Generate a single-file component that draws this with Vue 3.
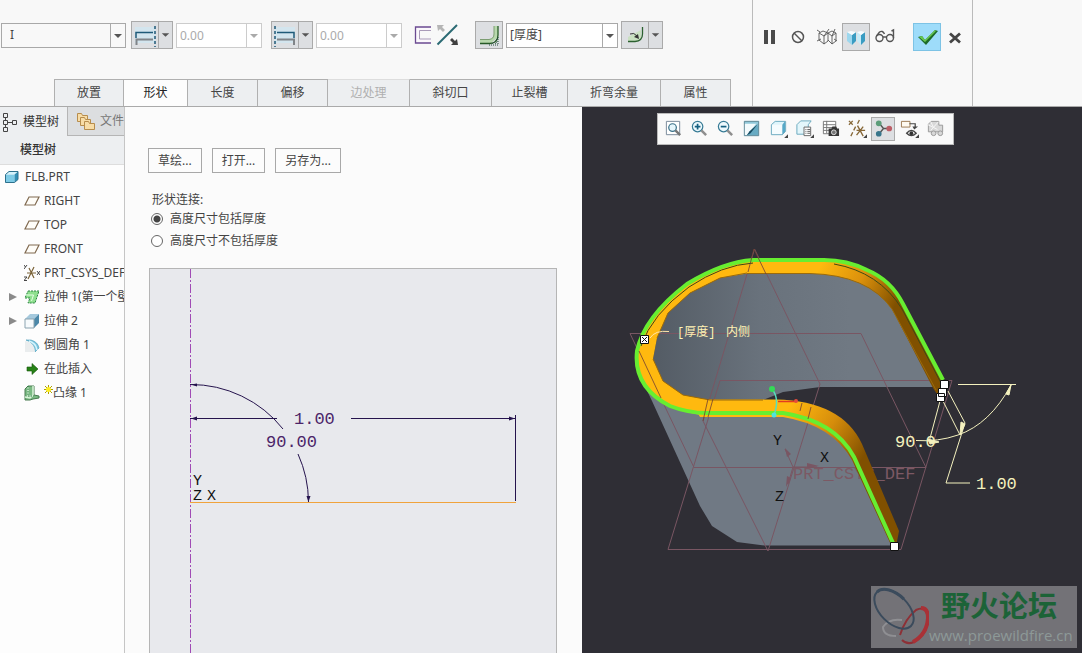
<script setup>
import { ref } from 'vue'

const tabs = [
  { label: '放置', w: 'w70' },
  { label: '形状', w: 'w64' },
  { label: '长度', w: 'w70' },
  { label: '偏移', w: 'w70' },
  { label: '边处理', w: 'w82', disabled: true },
  { label: '斜切口', w: 'w82' },
  { label: '止裂槽', w: 'w76' },
  { label: '折弯余量', w: 'w93' },
  { label: '属性', w: 'w70' },
]
const active = ref('形状')
const heightMode = ref('include')
const tree = [
  { icon: 'plane', label: 'RIGHT' },
  { icon: 'plane', label: 'TOP' },
  { icon: 'plane', label: 'FRONT' },
  { icon: 'csys', label: 'PRT_CSYS_DEF' },
  { icon: 'extrude', label: '拉伸 1(第一个壁)', open: true },
  { icon: 'box', label: '拉伸 2', open: true },
  { icon: 'round', label: '倒圆角 1' },
  { icon: 'insert', label: '在此插入' },
  { icon: 'flange', label: '凸缘 1', fresh: true },
]
</script>

<template>
  <div class="app">
    <header class="ribbon">
      <div class="dash">
        <div class="controls">
          <div class="combo profile">
            <select aria-label="轮廓"><option>I</option></select>
            <svg class="caret" viewBox="0 0 14 23"><path d="M3 10h8l-4 4z" /></svg>
          </div>
          <div class="split">
            <button aria-label="第一端">
              <svg viewBox="0 0 26 26"><path d="M3 5h20v16H3z" fill="#d3e5ee" /><path d="M4 16V10.500H21" fill="none" stroke="#1f5a78" stroke-width="1.500" /><path d="M4.500 23V17.500H21" fill="none" stroke="#808488" stroke-width="2" /><path d="M23 4V25" stroke="#1f5a78" stroke-width="1.500" stroke-dasharray="3 2" /></svg>
            </button>
            <button class="drop" aria-label="第一端选项"><svg class="caret" viewBox="0 0 14 26"><path d="M3 11h8l-4 4z" /></svg></button>
          </div>
          <div class="combo num off">
            <input value="0.00" aria-label="第一端长度" disabled />
            <svg class="caret" viewBox="0 0 14 23"><path d="M3 10h8l-4 4z" /></svg>
          </div>
          <div class="split second">
            <button aria-label="第二端">
              <svg viewBox="0 0 26 26"><path d="M3 5h20v16H3z" fill="#d3e5ee" /><path d="M5 10.500H22V16" fill="none" stroke="#1f5a78" stroke-width="1.500" /><path d="M5 17.500H22V23" fill="none" stroke="#808488" stroke-width="2" /><path d="M3 4V25" stroke="#1f5a78" stroke-width="1.500" stroke-dasharray="3 2" /></svg>
            </button>
            <button class="drop" aria-label="第二端选项"><svg class="caret" viewBox="0 0 14 26"><path d="M3 11h8l-4 4z" /></svg></button>
          </div>
          <div class="combo num off">
            <input value="0.00" aria-label="第二端长度" disabled />
            <svg class="caret" viewBox="0 0 14 23"><path d="M3 10h8l-4 4z" /></svg>
          </div>
          <button class="flat first" aria-label="切换侧">
            <svg viewBox="0 0 20 20" width="20" height="20"><path d="M18 1.500H2.500V18H18V14H6.500V5.500H18z" fill="#fbf8fc" /><path d="M18 2H2.500V18H18" fill="none" stroke="#6b4a91" stroke-width="1.300" /><path d="M18 5.500H6.500V14H18" fill="none" stroke="#a99bb8" /></svg>
          </button>
          <button class="flat" aria-label="反向">
            <svg viewBox="0 0 24 24" width="24" height="24"><path d="M1.500 21.500L21 2" stroke="#2a6a73" stroke-width="2" /><path d="M1 2h7L6 4l3 3-2 2-3-3-2 2z" fill="#b5b5b5" /><path d="M22 22h-7l2-2-3-3 2-2 3 3 2-2z" fill="#404040" /></svg>
          </button>
          <button class="press" aria-label="厚度侧">
            <svg viewBox="0 0 26 26"><path d="M4 17H14Q18 16 18 12V4H22V15L14 22H4z" fill="#b8d8ad" /><path d="M4 17.500H13Q18 17 18 12V4" fill="none" stroke="#7c9d72" /><path d="M4 21.500H14Q22 21 22 13V4" fill="none" stroke="#275a27" stroke-width="1.300" /><path d="M22 15V23H13" fill="none" stroke="#234d3a" stroke-dasharray="1 1" /><path d="M16 22L22 16M19 22L22 19" stroke="#234d3a" stroke-dasharray="1 1" /></svg>
          </button>
          <div class="combo thick">
            <select aria-label="厚度"><option>[厚度]</option></select>
            <svg class="caret" viewBox="0 0 14 23"><path d="M3 10h8l-4 4z" /></svg>
          </div>
          <div class="split">
            <button aria-label="折弯半径">
              <svg viewBox="0 0 26 26"><path d="M6 15L19 8V17L14 20H6z" fill="#c9e0c1" /><path d="M6 19.500H13Q20.500 19 20.500 12V5" fill="none" stroke="#2c6130" stroke-width="1.300" /><path d="M8 12Q12 10 15 14" fill="none" stroke="#333" /><path d="M17 17l-5-2 4-3z" fill="#333" /></svg>
            </button>
            <button class="drop" aria-label="半径选项"><svg class="caret" viewBox="0 0 14 26"><path d="M3 11h8l-4 4z" /></svg></button>
          </div>
        </div>
        <nav class="tabs">
          <button v-for="t in tabs" :key="t.label" :class="[t.w, { on: active === t.label }]" :disabled="t.disabled" @click="active = t.label">{{ t.label }}</button>
        </nav>
      </div>
      <div class="actions">
        <button class="act" aria-label="暂停"><svg viewBox="0 0 26 26"><path d="M8 6h4v14H8zM15 6h4v14h-4z" fill="#4a4a4a" /></svg></button>
        <button class="act" aria-label="无预览"><svg viewBox="0 0 26 26"><circle cx="13" cy="13" r="5.500" fill="none" stroke="#555" stroke-width="1.500" /><path d="M9 9l8 8" stroke="#555" stroke-width="1.500" /></svg></button>
        <button class="act" aria-label="未附着预览"><svg viewBox="0 0 26 26" fill="none" stroke="#555" stroke-width="0.900"><path d="M5 9l5 3v8l-5-4zM10 12l4-3v8l-4 3M14 9l4 3v8l-4-4M18 12l4-3v8l-4 3M5 9l4-2 5 2 4-2 4 2M10 12l5-7M18 12l3-7M3 6l3 2M3 17l4-2M20 15l3 2" /></svg></button>
        <button class="act press" aria-label="附着预览"><svg viewBox="0 0 26 26"><path d="M4 8l5 3v10l-5-4z" fill="#9cd7ee" /><path d="M9 11l4-3v9l-4 4z" fill="#3a9cc2" /><path d="M4 8l4-1 5 1-4 3z" fill="#f5fcff" /><path d="M14 8l4 3v10l-4-4z" fill="#c6ecf8" /><path d="M18 11l4-3v9l-4 4z" fill="#3a9cc2" /><path d="M14 8l4-1 4 1-4 3z" fill="#f5fcff" /></svg></button>
        <button class="act" aria-label="特征预览"><svg viewBox="0 0 26 26" fill="none" stroke="#555" stroke-width="1.400"><circle cx="7.500" cy="14" r="3.500" /><circle cx="18" cy="14" r="3.500" /><path d="M11 13h4M4.500 12l3-4q3-2 5 2M21.500 14V6l-2 1" /></svg></button>
        <button class="act ok" aria-label="确定"><svg viewBox="0 0 26 26"><path d="M4 13l4-1 3 4L21 6l3 1-12 14z" fill="#1d6b28" /><path d="M5 13l3-1 3 4L21 6l1 1-11 11z" fill="#67c94f" /></svg></button>
        <button class="act" aria-label="取消"><svg viewBox="0 0 26 26"><path d="M8 9.500l10 9M18 9.500l-10 9" stroke="#454545" stroke-width="2.800" /></svg></button>
      </div>
    </header>

    <main class="work">
      <aside class="side">
        <div class="side-tabs">
          <button class="on">
            <svg viewBox="0 0 16 20" width="16" height="20" fill="none" stroke="#444"><path d="M2.500 1.500h4v4h-4zM2.500 8.500h4v4h-4zM2.500 15.500h4v4h-4zM11.500 8.500h4v4h-4zM4.500 5.500v3M4.500 12.500v3M6.500 10.500h5" /></svg>
            模型树
          </button>
          <button>
            <svg viewBox="0 0 20 20" width="20" height="20" fill="#f8dda7" stroke="#b78d4d"><path d="M1.500 2.500h4l1 2h5v6h-10z" /><path d="M4.500 6.500h4l1 2h5v6h-10z" /><path d="M8.500 10.500h4l1 2h5v6h-10z" /></svg>
            文件夹
          </button>
        </div>
        <h2>模型树</h2>
        <ul class="tree">
          <li class="root">
            <svg viewBox="0 0 16 16" width="16" height="16"><path d="M2 5l3-3h9l-3 3z" fill="#d4f2fb" /><path d="M1.500 5.500h9v8h-9z" fill="#7ecbe6" /><path d="M10.500 5.500l3.500-3v8l-3.500 3z" fill="#318fb5" /><path d="M1.500 5.500l3.500-3h9v8l-3.500 3h-9z" fill="none" stroke="#2d718d" /></svg>
            <span>FLB.PRT</span>
          </li>
          <li v-for="n in tree" :key="n.label">
            <svg class="tw" viewBox="0 0 8 10" width="8" height="10"><path v-if="n.open" d="M0 1l8 4-8 4z" fill="#8a8a8a" /></svg>
            <svg class="ic" viewBox="0 0 16 16" width="16" height="16">
              <path v-if="n.icon === 'plane'" d="M5 4h10l-4 8H1z" fill="#fffdf8" stroke="#806a50" stroke-width="1.200" />
              <g v-else-if="n.icon === 'csys'" fill="none" stroke="#7b6338" stroke-width="1.200"><path d="M3 8h9M5 3l5 10M10 2L4 14" /><path d="M0 0l1.500 2L3 0M1.500 2L0 4M0 12h3l-3 3.500h3M13 6l3 4M16 6l-3 4" stroke="#333" stroke-width="0.900" /></g>
              <g v-else-if="n.icon === 'extrude'"><path d="M4 2h11l-4 12H4l2-5H1z" fill="#8fe08f" stroke="#2e8545" stroke-dasharray="2 1" /><path d="M1.500 6h8l-2 6" fill="none" stroke="#e6ffe6" /></g>
              <g v-else-if="n.icon === 'box'"><path d="M1 6l5-5h9l-5 5z" fill="#a5c9dd" /><path d="M10 6l5-5v9l-5 5z" fill="#4c88a9" /><path d="M1 6h9v9H1z" fill="#f6fafc" stroke="#8ba3b0" /></g>
              <g v-else-if="n.icon === 'round'"><path d="M2 3h5q7 2 8 8l-4 4q0-9-9-12z" fill="#7cc6df" stroke="#4a9bb8" stroke-width="0.600" /><path d="M1 4q9 1 10 11H1z" fill="#eaedee" /><path d="M5 4q7 2 8 9" fill="none" stroke="#d8f5fd" stroke-width="1.500" /></g>
              <path v-else-if="n.icon === 'insert'" d="M3 6h5V2.500L14 8l-6 5.500V10H3z" fill="#278216" stroke="#14540c" stroke-width="0.600" />
              <g v-else><path d="M1 4l3-3h6v9l5 1v2l-6 1-3 1H1z" fill="#7aba82" stroke="#497b50" /><path d="M4 2v9h5V1M1 12l5 1 3-3" fill="none" stroke="#d9f3d9" stroke-width="1.500" /><path d="M4 1v10h6" fill="none" stroke="#26783b" stroke-dasharray="1.500 1" /></g>
            </svg>
            <svg v-if="n.fresh" class="star" viewBox="0 0 9 9" width="9" height="9"><path d="M4.500 0v9M0 4.500h9M1 1l7 7M8 1L1 8" stroke="#ada000" /><circle cx="4.500" cy="4.500" r="2.500" fill="#ffee20" /></svg>
            <span>{{ n.label }}</span>
          </li>
        </ul>
      </aside>

      <section class="panel">
        <div class="btns">
          <button>草绘...</button>
          <button>打开...</button>
          <button>另存为...</button>
        </div>
        <fieldset>
          <legend>形状连接:</legend>
          <label><input v-model="heightMode" type="radio" name="height" value="include" />高度尺寸包括厚度</label>
          <label><input v-model="heightMode" type="radio" name="height" value="exclude" />高度尺寸不包括厚度</label>
        </fieldset>
        <div class="sketch">
          <svg viewBox="150 269 406 384" preserveAspectRatio="xMinYMin slice">
            <path d="M190.500 269V653" stroke="#a04bb5" stroke-dasharray="9 2 2 2" />
            <path d="M190 502.500H516" stroke="#f0a33c" />
            <g fill="none" stroke="#25134d">
              <path d="M190 384.500A118 118 0 0 1 283 429M298 454A118 118 0 0 1 308.500 502" />
              <path d="M190 418.500H277M351 418.500H515M515.500 415V501" />
            </g>
            <path d="M191 418.500l6-2v4zM515 418.500l-6-2v4zM308.500 502l-2-6h4zM191 384.500l6-1v3z" fill="#25134d" />
            <g class="cad" fill="#4b2468"><text x="294" y="424">1.00</text><text x="266" y="447">90.00</text></g>
            <g class="axis" fill="#111"><text x="193" y="485">Y</text><text x="193" y="500">Z</text><text x="207" y="500">X</text></g>
          </svg>
        </div>
      </section>

      <section class="view">
        <svg class="scene" viewBox="582 106 500 547" preserveAspectRatio="xMinYMin slice">
          <defs>
            <linearGradient id="top" gradientUnits="userSpaceOnUse" x1="820" y1="265" x2="895" y2="305"><stop offset="0" stop-color="#ffb90f" /><stop offset="0.500" stop-color="#dc910c" /><stop offset="1" stop-color="#805000" /></linearGradient>
            <linearGradient id="low" gradientUnits="userSpaceOnUse" x1="790" y1="405" x2="864" y2="455"><stop offset="0" stop-color="#ffb90f" /><stop offset="0.500" stop-color="#d68d0b" /><stop offset="1" stop-color="#805000" /></linearGradient>
            <linearGradient id="wall" gradientUnits="userSpaceOnUse" x1="650" y1="0" x2="850" y2="0"><stop offset="0" stop-color="#535b64" /><stop offset="0.550" stop-color="#69727c" /><stop offset="1" stop-color="#707983" /></linearGradient>
          </defs>
          <path d="M640 375L652 400L700 505L712 525L737 541L765 544.500H894L855 458Q838 420 784 411H700z" fill="#707984" />
          <path d="M653 358L657 337L668 312L690 292L720 277L747 272H820Q872 278 892 308L936 386H820L783 391L763 399H710L683 394L663 380z" fill="url(#wall)" />
          <g fill="none" stroke="#795663">
            <path d="M754.500 248L703 420L768 550L820 383z" />
            <path d="M720 379.500H952L901 548.500H668z" />
            <path d="M630 332.500H861L926 466.500H694z" />
          </g>
          <text class="cad" x="793" y="478" fill="#7c5964">PRT_CSYS_DEF</text>
          <path d="M753 259H824Q847 259 867 269Q891 279 903 303L944 382L939 396L933 387L892 308Q868 274 810 272.500H747L720 277L690 292L668 312L657 337L653 358L663 380L683 394L710 399H765L710 415Q688 413 670 405Q633 386 637 350Q644 316 687 283Q723 261 753 259z" fill="url(#top)" />
          <path d="M690 398.500H776Q842 400 862 443L899 530L896 546L891 544L852 459Q832 424 783 416H700z" fill="url(#low)" />
          <path d="M747 272.500H810Q868 274 892 308L936 389M653 358L663 380L683 394L710 399H763M657 337L668 312L690 292L720 277L747 272" fill="none" stroke="#9a6a0c" />
          <path d="M753 262Q722 264 689 286Q652 313 641 345M834 263Q879 271 902 308L941 382" fill="none" stroke="#3c4a16" />
          <path d="M943 379L903 303Q891 279 867 269Q847 259 824 259H753Q723 261 687 283Q644 316 637 350Q633 386 670 405Q688 412 707 412H783Q835 420 854 456L893 542" fill="none" stroke="#67ee31" stroke-width="4" />
          <g fill="none" stroke="#704033" stroke-opacity="0.800"><path d="M754 248L748 271M754 248L766 273M639 350L661 397M708 398L703 420M713 398L708 416M802 402L800 410M811 406L808 418" /></g>
          <path d="M772 388Q780 398 774 414" fill="none" stroke="#57dfbd" stroke-width="1.500" />
          <path d="M778 400.500H796" stroke="#e33b20" stroke-width="1.500" /><circle cx="796" cy="400" r="2" fill="#e34b3b" />
          <circle cx="772" cy="388" r="3" fill="#35d956" /><circle cx="774" cy="414" r="2.500" fill="#52e2dc" />
          <path d="M793 466L785 448M793 466H817M793 466L788 483" stroke="#795663" fill="none" /><path d="M785 447l2 9 4-3zM819 465l-12-3v5zM786 486l1-11 4 2z" fill="#795663" />
          <g class="axis" fill="#111"><text x="773" y="444">Y</text><text x="820" y="461">X</text><text x="775" y="500">Z</text></g>
          <g fill="none" stroke="#f4f1be">
            <path d="M958 383.500H1016M1011 384Q990 423 958 434Q938 441 916 439.500M948 390L965 422L946 482H970M942 398L960 434M940 400L929 441" />
            <path d="M650 337Q655 329 669 330.500" stroke="#ffe5a8" />
          </g>
          <path d="M1011 384l-5 9 3 1zM960 434l1-13 4 2zM928 438l11 3-9 2z" fill="#f4f1be" stroke="#f4f1be" />
          <g class="cad" fill="#f4f1be"><text x="895" y="446">90.0</text><text x="976" y="488">1.00</text></g>
          <text class="note" x="677" y="335" fill="#fff2b4">[厚度]</text><text class="note" x="726" y="335" fill="#fff2b4">内侧</text>
          <g fill="#fff" stroke="#111"><path d="M936.500 392.500h8v8h-8zM938.500 387.500h8v8h-8zM940.500 379.500h8v8h-8zM890.500 541.500h8v8h-8zM640.500 334.500h8v8h-8z" /><path d="M642 336l5 5M647 336l-5 5" /></g>
        </svg>

        <div class="viewbar">
          <button aria-label="重新调整"><svg viewBox="0 0 20 20"><path d="M2.500 2.500h14v14h-14z" fill="#fff" stroke="#789" /><circle cx="9" cy="9" r="4" fill="#e6f6fc" stroke="#397088" stroke-width="1.300" /><path d="M12 12l5 5" stroke="#777" stroke-width="2.500" /></svg></button>
          <button aria-label="放大"><svg viewBox="0 0 20 20"><circle cx="8" cy="8" r="5.500" fill="#eef9fd" stroke="#397c96" stroke-width="1.300" /><path d="M5 8h6M8 5v6" stroke="#156081" stroke-width="1.800" /><path d="M12 12l5 5" stroke="#8e8e8e" stroke-width="2.600" /></svg></button>
          <button aria-label="缩小"><svg viewBox="0 0 20 20"><circle cx="8" cy="8" r="5.500" fill="#eef9fd" stroke="#397c96" stroke-width="1.300" /><path d="M5 8h6" stroke="#156081" stroke-width="1.800" /><path d="M12 12l5 5" stroke="#8e8e8e" stroke-width="2.600" /></svg></button>
          <button aria-label="重画"><svg viewBox="0 0 20 20"><path d="M2 2h16v16H2z" fill="#91c8da" /><path d="M2 5h13L5 17H2z" fill="#f3fafc" /><path d="M6 16L17 6v11H6z" fill="#68abc3" /><path d="M5 17l3-4 9-8-8 10z" fill="#174c62" /><path d="M2.500 2.500h15v15h-15z" fill="none" stroke="#668b98" /></svg></button>
          <button aria-label="显示样式"><svg viewBox="0 0 20 20"><path d="M2 6l4-4h11l-3 4z" fill="#dff5fb" /><path d="M14 6l3-4v11l-3 4z" fill="#56a9c8" /><path d="M2.500 6.500h11v10h-11z" fill="#f5fcfe" /><path d="M2.500 6l4-3.500h11V13L14 16.500H2.500z" fill="none" stroke="#69a9be" /><path d="M20 16v4h-4z" fill="#444" /></svg></button>
          <button aria-label="已保存方向"><svg viewBox="0 0 20 20"><path d="M2 6l4-4h11l-3 4v10H2z" fill="#e3f6fb" stroke="#69a9be" /><path d="M9.500 8.500h7v9h-7z" fill="#fff" stroke="#666" /><path d="M11 11h1M13 11h3M11 13h1M13 13h3M11 15h1M13 15h3" stroke="#555" /><path d="M20 16v4h-4z" fill="#444" /></svg></button>
          <button aria-label="视图管理器"><svg viewBox="0 0 20 20"><path d="M2.500 2.500h13v13h-13zM2.500 6h13M2.500 9h13M2.500 12h13M6 2v13" fill="#fff" stroke="#777" /><path d="M8 10h3l1-2h4l1 2h2v8H8z" fill="#373737" /><circle cx="13.500" cy="14" r="2.500" fill="#777" stroke="#ddd" /></svg></button>
          <button aria-label="基准显示"><svg viewBox="0 0 20 20" fill="none" stroke="#876838" stroke-width="1.400"><path d="M1 2l4 4M5 2L1 6M12 1l-2 4M8 8l-2 4M5 14l-2 4M10 7l6 11M16 8l-7 9M9 12h9" /><path d="M20 16v4h-4z" fill="#444" stroke="none" /></svg></button>
          <button class="press" aria-label="旋转中心"><svg viewBox="0 0 20 20"><path d="M5 4l5 6-5 6M10 10h6" fill="none" stroke="#555" stroke-width="1.500" /><circle cx="5" cy="4.500" r="3" fill="#5b9c79" /><circle cx="5" cy="15.500" r="3" fill="#38758b" /><circle cx="16" cy="10" r="3" fill="#bd5e67" /></svg></button>
          <button aria-label="注释显示"><svg viewBox="0 0 20 20"><path d="M1.500 2.500h9v6h-9z" fill="#fffaf0" stroke="#9b7952" /><path d="M10 5h6v4" fill="none" stroke="#444" stroke-width="1.300" /><path d="M13 8h6l-4 3z" fill="#444" /><path d="M7 15q5-6 10 0-5 5-10 0z" fill="#fff" stroke="#444" stroke-width="1.400" /><circle cx="12" cy="15" r="2" fill="#333" /><path d="M20 16v4h-4z" fill="#444" /></svg></button>
          <button aria-label="预览" disabled><svg viewBox="0 0 20 20" fill="#d8d8d8" stroke="#999"><path d="M2.500 5.500l3-3h8v4h4v7h-15z" /><path d="M2 6l10 5M5 3l3 6M13 3l-8 9" fill="none" stroke="#f7f7f7" /><circle cx="8" cy="15" r="2.500" /><circle cx="15" cy="15" r="2.500" /></svg></button>
        </div>

        <div class="mark">
          <svg viewBox="0 0 58 62" width="58" height="62" fill="none">
            <path d="M29 49Q34 33 45 24Q55 19 57 30Q57 48 43 56Q36 59 31 54" stroke="#8d3036" stroke-width="2" />
            <path d="M50 22Q57 22 57 32Q56 48 42 56" stroke="#a93136" stroke-width="4" />
            <path d="M31 34Q18 32 12 41Q12 50 25 50" stroke="#8f8f93" stroke-width="2" />
            <g transform="rotate(45 23 23)"><ellipse cx="23" cy="23" rx="24" ry="14" stroke="#3b4b5c" stroke-width="2" /><path d="M-1 23a24 14 0 0 1 24-14" stroke="#3b4b5c" stroke-width="3" /></g>
          </svg>
          <div class="words"><strong>野火论坛</strong><span>www.proewildfire.cn</span></div>
        </div>
      </section>
    </main>
  </div>
</template>

<style>
body { margin: 0; overflow: hidden; }
</style>

<style scoped>
* { box-sizing: border-box; }
.app { display: flex; flex-direction: column; height: 100vh; background: #f8f8f8; color: #444; font: 12px/16px "Noto Sans", "Noto Sans CJK SC", sans-serif; }
button, input, select { font: inherit; color: inherit; margin: 0; padding: 0; border-radius: 0; }
button { border: 0; background: none; }
svg { display: block; flex: none; }
.ribbon { display: flex; flex: none; height: 107px; border-bottom: 1px solid #aaa; }
.dash { display: flex; flex-direction: column; justify-content: space-between; width: 753px; border-right: 1px solid #bbb; padding-top: 21px; }
.controls { display: flex; align-items: center; height: 28px; padding-left: 1px; }
.combo { display: grid; grid-template-columns: 1fr 15px; height: 25px; border: 1px solid #a8a8a8; background: #fff; }
.combo select, .combo input { grid-area: 1 / 1 / 2 / 2; width: 100%; min-width: 0; height: 23px; border: 0; padding-left: 3px; background: transparent; appearance: none; outline: 0; }
.combo .caret { width: 15px; height: 23px; border-left: 1px solid #aaa; }
.caret { fill: #555; }
.profile { width: 125px; background: #f8f8f8; margin-right: 5px; }
.profile select { padding-left: 8px; }
.num { width: 86px; }
.off { border-color: #ccc; color: #aaa; }
.off .caret { fill: #aaa; border-color: #ccc; }
.thick { width: 112px; margin: 0 3px; }
.split { display: flex; height: 28px; border: 1px solid #aaa; background: #dddfe2; margin-right: 3px; }
.split svg { width: 26px; height: 26px; }
.split .drop { border-left: 1px solid #aaa; }
.split .drop .caret { width: 13px; }
.second { margin-left: 9px; }
.flat.first { margin: 0 3px 0 11px; }
.press { border: 1px solid #aaa; background: #dddfe2; }
.controls > .press { width: 28px; height: 28px; margin-left: 15px; }
.tabs { display: flex; height: 27px; padding-left: 54px; }
.tabs button { flex: none; border: 1px solid #b0b0b0; border-width: 1px 1px 0 0; background: #edeff1; }
.tabs button:first-child { border-left-width: 1px; }
.tabs button.on { background: #fdfdfd; color: #222; }
.tabs button:disabled { color: #b0b0b0; border-top-color: #ddd; }
.w70 { width: 70px; }
.w64 { width: 64px; }
.w82 { width: 82px; }
.w76 { width: 76px; }
.w93 { width: 93px; }
.actions { display: flex; align-items: flex-start; width: 220px; padding: 23px 0 0 2px; border-right: 1px solid #bbb; }
.act { width: 28px; height: 28px; margin-right: 1px; }
.act svg { width: 26px; height: 26px; margin: auto; }
.act.ok { margin: 0 0 0 13px; background: #9edcfa; border: 1px solid #7dc3e5; }
.work { display: flex; flex: 1; min-height: 0; }
.side { width: 125px; flex: none; overflow: hidden; border-right: 1px solid #c5c5c5; background: #fdfdfd; white-space: nowrap; }
.side-tabs { display: flex; height: 29px; background: #edeff1; }
.side-tabs button { display: flex; align-items: center; flex: none; gap: 6px; padding: 0 8px 0 1px; color: #333; }
.side-tabs button + button { padding-left: 8px; gap: 4px; background: #dcdee0; border: 1px solid #b5b5b5; border-top: 0; color: #777; }
.side h2 { margin: 0; padding: 6px 20px; height: 29px; font-size: 12px; line-height: 16px; font-weight: 500; color: #333; background: #edeff1; border-bottom: 1px solid #ddd; }
.tree { list-style: none; margin: 0; padding: 0; }
.tree li { display: flex; align-items: center; height: 24px; padding-left: 9px; }
.tree .root { padding-left: 4px; gap: 5px; }
.tree .tw { margin-right: 7px; }
.tree .ic { margin-right: 4px; }
.star { align-self: flex-start; margin-top: 4px; }
.panel { display: flex; flex-direction: column; width: 457px; flex: none; padding: 41px 25px 0 24px; background: #fbfbfb; }
.btns { display: flex; gap: 10px; margin-left: -1px; }
.btns button { height: 25px; padding: 0 9px; border: 1px solid #a8a8a8; background: #fcfcfc; }
fieldset { margin: 19px 0 0; padding: 0 0 0 2px; border: 0; height: 76px; }
legend { padding: 0 0 0 1px; }
label { display: flex; align-items: center; gap: 7px; height: 22px; }
input[type="radio"] { appearance: none; width: 12px; height: 12px; border: 1px solid #666; border-radius: 50%; background: #fff; }
input[type="radio"]:checked { background: radial-gradient(circle, #444 0 3px, #fff 4px); }
.sketch { flex: 1; min-height: 0; overflow: hidden; border: 1px solid #b5b5b5; border-bottom: 0; background: #e8e9ed; }
.sketch svg, .scene { width: 100%; height: 100%; }
.cad { font: 17px "Liberation Mono", monospace; }
.axis { font: 15px "Liberation Mono", monospace; }
.note { font: 12px "Liberation Mono", "Noto Sans CJK SC", monospace; }
.view { position: relative; flex: 1; min-width: 0; background: #2f2e35; overflow: hidden; }
.viewbar { position: absolute; top: 6px; left: 75px; display: flex; align-items: center; justify-content: space-between; width: 297px; height: 32px; padding: 0 5px 1px 3px; border: 1px solid #bbb; background: #f9f9f9; }
.viewbar button { display: grid; place-items: center; width: 24px; height: 24px; }
.viewbar svg { width: 19px; height: 19px; }
.mark { position: absolute; right: 5px; bottom: 5px; display: flex; width: 206px; height: 62px; background: #737277; }
.words { display: flex; flex-direction: column; color: #8d9997; }
.words strong { padding-left: 12px; font-size: 29px; line-height: 40px; color: #1c6337; }
.words span { font: 15px/18px "Open Sans", sans-serif; }
</style>
